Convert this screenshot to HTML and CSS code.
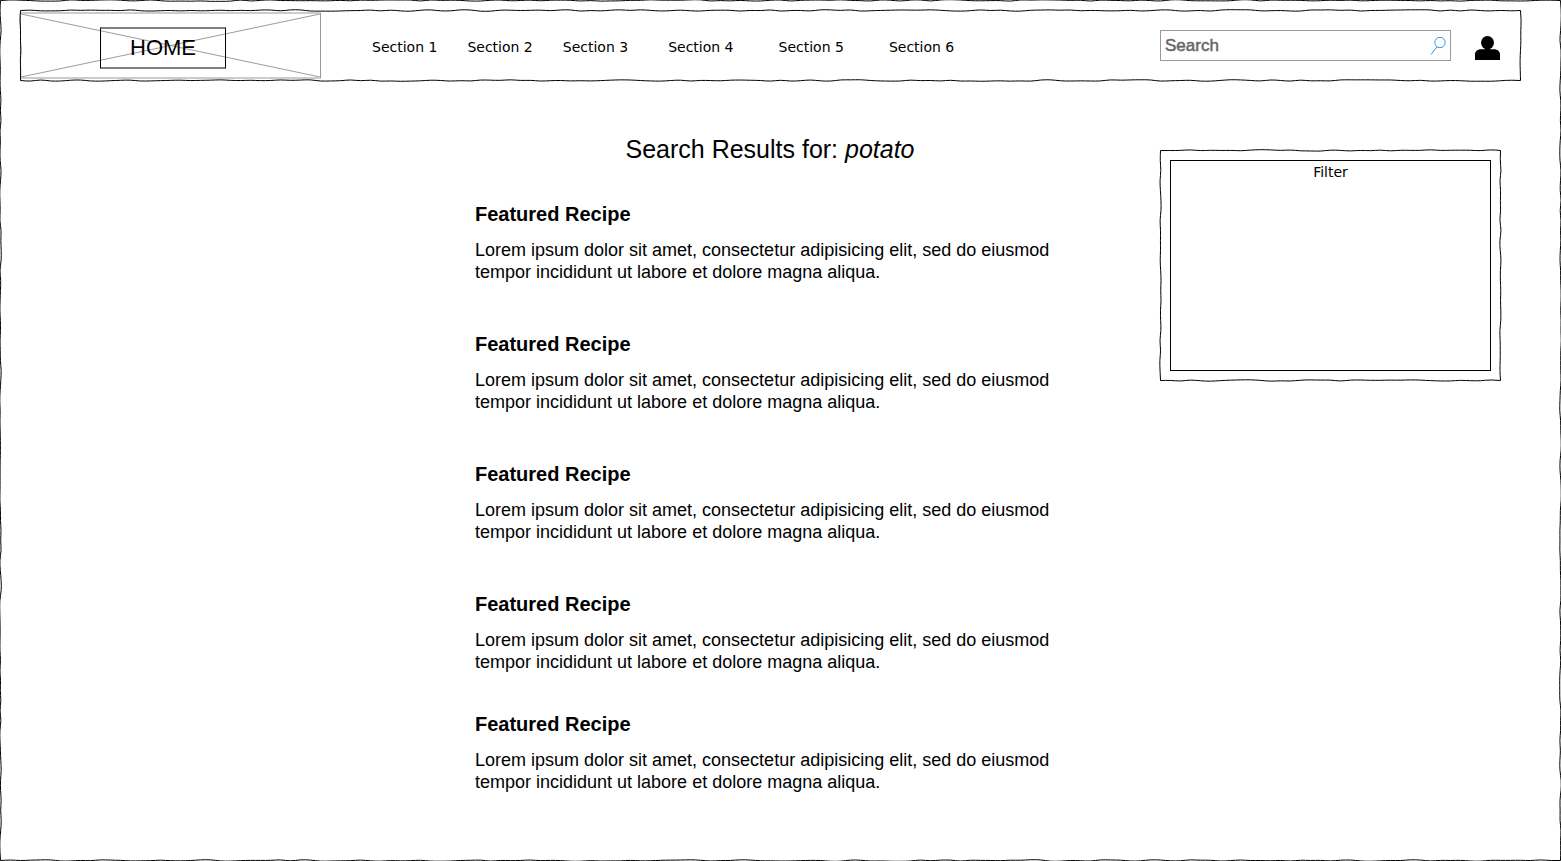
FILE: index.html
```html
<!DOCTYPE html>
<html lang="en">
<head>
<meta charset="utf-8">
<meta name="viewport" content="width=device-width, initial-scale=1">
<title>Search Results</title>
<link rel="stylesheet" href="styles.css">
</head>
<body>
<div class="page sketch" data-seed="7">
  <header class="header sketch" data-seed="21">
    <div class="logo">
      <svg class="logo-cross" viewBox="0 0 300 66" preserveAspectRatio="none" aria-hidden="true">
        <path d="M0 0L300 66M0 66L300 0"/>
      </svg>
      <a class="home" href="#">HOME</a>
    </div>
    <nav class="nav" aria-label="Sections">
      <div class="nav-group">
        <a href="#">Section 1</a>
        <a href="#">Section 2</a>
        <a href="#">Section 3</a>
      </div>
      <div class="nav-group nav-group-wide">
        <a href="#">Section 4</a>
        <a href="#">Section 5</a>
        <a href="#">Section 6</a>
      </div>
    </nav>
    <form class="search">
      <input class="search-input" type="search" placeholder="Search" aria-label="Search">
      <button class="search-button" type="button" aria-label="Submit search">
        <svg width="16" height="19" viewBox="0 0 16 19" aria-hidden="true">
          <circle cx="10" cy="6.500" r="5.200"/>
          <path d="M7 10.800L1 18.500"/>
        </svg>
      </button>
    </form>
    <button class="account" type="button" aria-label="Account">
      <svg width="25" height="24" viewBox="0 0 25 24" aria-hidden="true">
        <ellipse cx="12.500" cy="6.800" rx="6.500" ry="6.800"/>
        <path d="M10 12H15V13.300H19C22.500 13.300 25 15.500 25 18.500V24H0V18.500C0 15.500 2.500 13.300 6 13.300H10Z"/>
      </svg>
    </button>
  </header>

  <main class="main">
    <section class="results">
      <h1 class="title">Search Results for: <em>potato</em></h1>
      <article class="recipe">
        <h2>Featured Recipe</h2>
        <p>Lorem ipsum dolor sit amet, consectetur adipisicing elit, sed do eiusmod tempor incididunt ut labore et dolore magna aliqua.</p>
      </article>
      <article class="recipe">
        <h2>Featured Recipe</h2>
        <p>Lorem ipsum dolor sit amet, consectetur adipisicing elit, sed do eiusmod tempor incididunt ut labore et dolore magna aliqua.</p>
      </article>
      <article class="recipe">
        <h2>Featured Recipe</h2>
        <p>Lorem ipsum dolor sit amet, consectetur adipisicing elit, sed do eiusmod tempor incididunt ut labore et dolore magna aliqua.</p>
      </article>
      <article class="recipe">
        <h2>Featured Recipe</h2>
        <p>Lorem ipsum dolor sit amet, consectetur adipisicing elit, sed do eiusmod tempor incididunt ut labore et dolore magna aliqua.</p>
      </article>
      <article class="recipe">
        <h2>Featured Recipe</h2>
        <p>Lorem ipsum dolor sit amet, consectetur adipisicing elit, sed do eiusmod tempor incididunt ut labore et dolore magna aliqua.</p>
      </article>
    </section>
    <aside class="filter sketch" data-seed="43">
      <div class="filter-box">Filter</div>
    </aside>
  </main>
</div>
<script src="sketch.js"></script>
</body>
</html>
```
FILE: styles.css
```css
* {
  box-sizing: border-box;
}

body {
  margin: 0;
  background: #fff;
  color: #000;
  font-family: "Liberation Sans", Arial, sans-serif;
}

a {
  color: inherit;
  text-decoration: none;
}

button {
  padding: 0;
  border: 0;
  background: none;
  cursor: pointer;
}

svg {
  display: block;
}

/* Hand-drawn frame */
.sketch {
  position: relative;
}

.sketch-frame {
  position: absolute;
  inset: 0;
  width: 100%;
  height: 100%;
  overflow: visible;
  pointer-events: none;
  fill: none;
  stroke: #000;
  stroke-width: 1;
}

.page {
  min-height: 100vh;
  padding: 10px 40px 64px 20px;
}

/* Header */
.header {
  display: flex;
  align-items: center;
  min-height: 71px;
  padding: 2px 21px 2px 0;
}

.logo {
  position: relative;
  display: flex;
  flex: 0 0 301px;
  align-items: center;
  height: 67px;
  padding: 4px 0 0 79px;
  border: 1px solid #999;
  border-width: 2px 1px;
  border-color: #ccc #999;
}

.logo-cross {
  position: absolute;
  inset: 0;
  width: 100%;
  height: 100%;
  fill: none;
  stroke: #999;
}

.home {
  position: relative;
  width: 126px;
  border: 1px solid #000;
  border-width: 2px 1px;
  border-color: #808080 #000;
  font-size: 22px;
  line-height: 38px;
  text-align: center;
}

.nav {
  display: flex;
  flex: 1;
  gap: 40px;
  padding: 2px 0 0 51px;
  font: 14px/20px "DejaVu Sans", Verdana, sans-serif;
  white-space: nowrap;
}

.nav-group {
  display: flex;
  gap: 30px;
}

.nav-group-wide {
  gap: 45px;
}

.search {
  display: flex;
  flex: 0 0 291px;
  align-items: center;
  height: 31px;
  padding-right: 4px;
  border: 1px solid #999;
}

.search-input {
  flex: 1;
  min-width: 0;
  padding: 0 4px;
  border: 0;
  outline: 0;
  background: none;
  font: 17px/28px "Liberation Sans", Arial, sans-serif;
  -webkit-appearance: none;
  appearance: none;
}

.search-input::placeholder {
  color: #666;
  -webkit-text-stroke: 0.5px #666;
}

.search-button svg {
  fill: none;
  stroke: #2f97f3;
}

.account {
  margin: 4px 0 0 24px;
}

/* Content */
.main {
  display: grid;
  grid-template-columns: minmax(0, 455fr) minmax(0, 590px) minmax(0, 95fr) 341px;
  align-items: start;
  padding: 53px 20px 0 0;
}

.results {
  grid-column: 2;
}

.title {
  margin: 0 0 38px;
  font-size: 25px;
  font-weight: 400;
  line-height: 30px;
  text-align: center;
}

.recipe {
  margin-bottom: 49px;
}

.recipe:nth-last-child(2) {
  margin-bottom: 39px;
}

.recipe:last-child {
  margin-bottom: 0;
}

.recipe h2 {
  margin: 0 0 13px;
  font-size: 20px;
  line-height: 24px;
}

.recipe p {
  margin: 0;
  font-size: 18px;
  line-height: 22px;
}

.filter {
  grid-column: 4;
  margin-top: 16px;
  padding: 10px;
}

.filter-box {
  min-height: 211px;
  padding-top: 1px;
  border: 1px solid #000;
  font: 14px/20px "DejaVu Sans", Verdana, sans-serif;
  text-align: center;
}
```
FILE: sketch.js
```js
// Draws a slightly wavering outline around every .sketch element.
const SVG_NS = "http://www.w3.org/2000/svg";
const STEP = 10;
const WOBBLE = 0.9;

function randomFrom(seed) {
  let state = seed * 7919;
  return () => {
    state = (state * 1103515245 + 12345) % 2147483648;
    return state / 2147483648;
  };
}

function side(x1, y1, x2, y2, random) {
  const length = Math.hypot(x2 - x1, y2 - y1);
  const ux = (x2 - x1) / length;
  const uy = (y2 - y1) / length;
  const count = Math.max(1, Math.round(length / STEP));
  const points = [];
  for (let i = 1; i < count; i++) {
    const along = (i / count) * length;
    const off = (random() * 2 - 1) * WOBBLE;
    points.push([x1 + ux * along - uy * off, y1 + uy * along + ux * off]);
  }
  points.push([x2, y2]);
  let d = "";
  for (let i = 0; i < points.length - 1; i++) {
    const [px, py] = points[i];
    const [qx, qy] = points[i + 1];
    d += `Q${px} ${py} ${(px + qx) / 2} ${(py + qy) / 2}`;
  }
  return d + `L${x2} ${y2}`;
}

function drawFrame(element, path) {
  const right = element.offsetWidth - 0.5;
  const bottom = element.offsetHeight - 0.5;
  const random = randomFrom(Number(element.dataset.seed));
  path.setAttribute("d", "M0.5 0.5" +
    side(0.5, 0.5, right, 0.5, random) +
    side(right, 0.5, right, bottom, random) +
    side(right, bottom, 0.5, bottom, random) +
    side(0.5, bottom, 0.5, 0.5, random) + "Z");
}

document.querySelectorAll(".sketch").forEach((element) => {
  const svg = document.createElementNS(SVG_NS, "svg");
  const path = document.createElementNS(SVG_NS, "path");
  svg.setAttribute("class", "sketch-frame");
  svg.setAttribute("aria-hidden", "true");
  svg.append(path);
  element.append(svg);
  drawFrame(element, path);
  new ResizeObserver(() => drawFrame(element, path)).observe(element);
});
```
